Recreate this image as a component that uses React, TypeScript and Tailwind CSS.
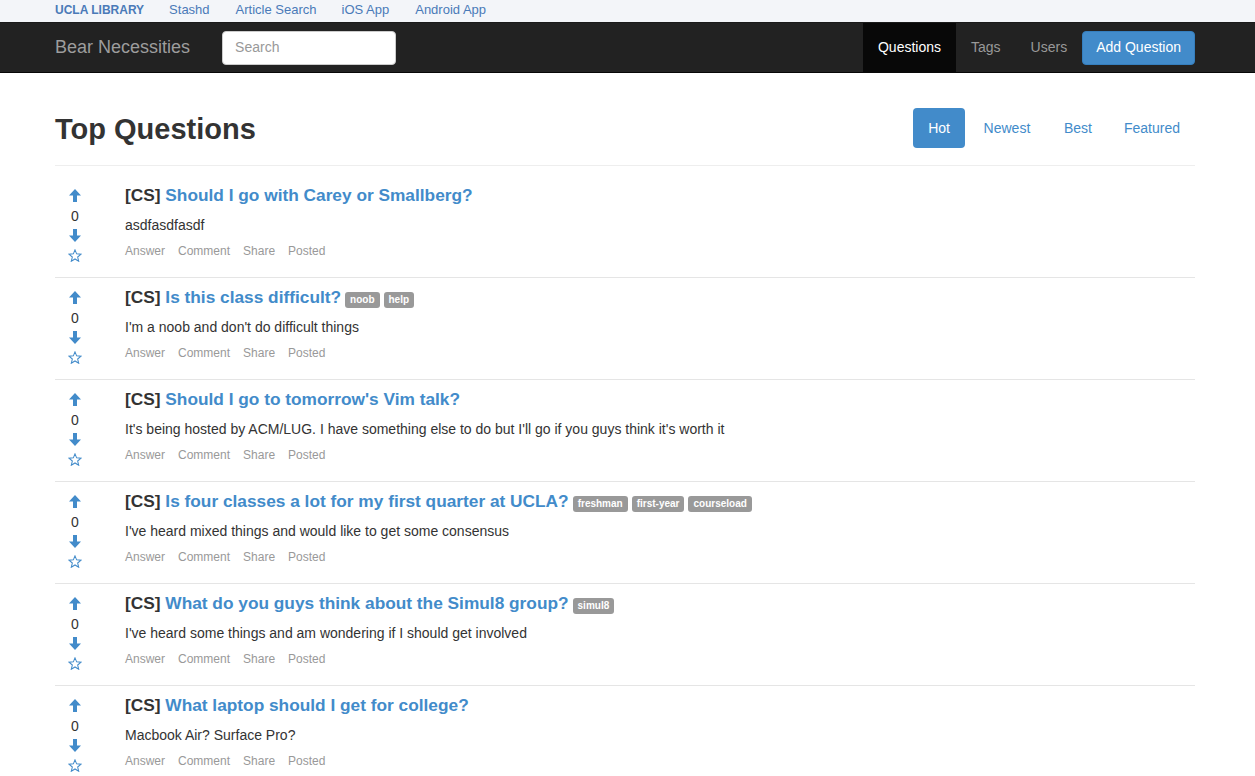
import React from "react";

const BLUE = "#428bca";

function ArrowUp() {
  return (
    <svg width="12" height="13" viewBox="0 0 12 13" className="block">
      <path d="M6 0 L12 6.5 L8 6.5 L8 13 L4 13 L4 6.5 L0 6.5 Z" fill={BLUE} />
    </svg>
  );
}
function ArrowDown() {
  return (
    <svg width="12" height="13" viewBox="0 0 12 13" className="block">
      <path d="M6 13 L12 6.5 L8 6.5 L8 0 L4 0 L4 6.5 L0 6.5 Z" fill={BLUE} />
    </svg>
  );
}
function Star() {
  return (
    <svg width="14" height="13" viewBox="0 0 24 23" className="block">
      <path
        d="M12 1.5 L14.9 8.6 L22.6 9.2 L16.7 14.2 L18.6 21.7 L12 17.6 L5.4 21.7 L7.3 14.2 L1.4 9.2 L9.1 8.6 Z"
        fill="none"
        stroke={BLUE}
        strokeWidth="1.8"
        strokeLinejoin="miter"
      />
    </svg>
  );
}

type Q = { title: string; body: string; tags: string[] };

const questions: Q[] = [
  { title: "Should I go with Carey or Smallberg?", body: "asdfasdfasdf", tags: [] },
  { title: "Is this class difficult?", body: "I'm a noob and don't do difficult things", tags: ["noob", "help"] },
  {
    title: "Should I go to tomorrow's Vim talk?",
    body: "It's being hosted by ACM/LUG. I have something else to do but I'll go if you guys think it's worth it",
    tags: [],
  },
  {
    title: "Is four classes a lot for my first quarter at UCLA?",
    body: "I've heard mixed things and would like to get some consensus",
    tags: ["freshman", "first-year", "courseload"],
  },
  {
    title: "What do you guys think about the Simul8 group?",
    body: "I've heard some things and am wondering if I should get involved",
    tags: ["simul8"],
  },
  { title: "What laptop should I get for college?", body: "Macbook Air? Surface Pro?", tags: [] },
];

function Row({ q, first }: { q: Q; first: boolean }) {
  return (
    <div
      className={`flex h-[102px] border-t ${first ? "border-transparent" : "border-[#e5e5e5]"}`}
    >
      <div className="w-[40px] flex flex-col items-center pt-[3px]">
        <div className="h-[13px] mt-[10px]"><ArrowUp /></div>
        <div className="text-[14px] leading-[14px] h-[14px] mt-[7px] text-[#333]">0</div>
        <div className="h-[13px] mt-[6px]"><ArrowDown /></div>
        <div className="h-[13px] mt-[7px]"><Star /></div>
      </div>
      <div className="ml-[30px] flex flex-col pt-[9px]">
        <div className="flex items-center h-[20px] leading-[20px]">
          <span className="text-[17.3px] font-bold text-[#333]">[CS]&nbsp;</span>
          <span className="text-[17.3px] font-bold text-[#428bca]">{q.title}</span>
          {q.tags.length > 0 && (
            <span className="flex gap-[4px] ml-[4px] mt-[5px]">
              {q.tags.map((t) => (
                <span
                  key={t}
                  className="bg-[#999] text-white text-[10px] font-bold rounded-[3px] px-[5px] h-[16px] leading-[16px]"
                >
                  {t}
                </span>
              ))}
            </span>
          )}
        </div>
        <div className="mt-[10px] h-[20px] leading-[20px] text-[14px] text-[#333]">{q.body}</div>
        <div className="mt-[8px] flex gap-[13px] text-[12px] leading-[16px] text-[#999]">
          <span>Answer</span>
          <span>Comment</span>
          <span>Share</span>
          <span>Posted</span>
        </div>
      </div>
    </div>
  );
}

export default function App() {
  return (
    <div
      className="w-[1255px] h-[776px] overflow-hidden bg-white"
      style={{ fontFamily: '"Liberation Sans", Arial, sans-serif' }}
    >
      {/* top bar */}
      <div className="h-[22px] bg-[#f3f5f9] flex items-center pl-[55px] gap-[25px] text-[13px] pb-[2px]">
        <span className="font-bold text-[12px] text-[#4a7ab8]">UCLA LIBRARY</span>
        <span className="text-[#4a7ab8]">Stashd</span>
        <span className="text-[#4a7ab8] ml-[1px]">Article Search</span>
        <span className="text-[#4a7ab8]">iOS App</span>
        <span className="text-[#4a7ab8] ml-[1px]">Android App</span>
      </div>
      {/* navbar */}
      <div className="h-[51px] bg-[#222] border-b border-[#080808] border-t border-t-[#1a1a1a]">
        <div className="w-[1140px] ml-[55px] h-full flex items-center">
          <span className="text-[18px] text-[#9d9d9d]">Bear Necessities</span>
          <div className="ml-[32px] w-[174px] h-[34px] bg-white rounded-[4px] border border-[#ccc] flex items-center px-[12px] text-[14px] text-[#999]">
            Search
          </div>
          <div className="ml-auto flex items-stretch h-full">
            <div className="bg-[#080808] text-white text-[14px] px-[15px] flex items-center">Questions</div>
            <div className="text-[#999] text-[14px] px-[15px] flex items-center">Tags</div>
            <div className="text-[#999] text-[14px] px-[15px] flex items-center">Users</div>
            <div className="flex items-center">
              <div className="h-[34px] px-[13px] bg-[#428bca] border border-[#357ebd] rounded-[4px] text-white text-[14px] flex items-center">
                Add Question
              </div>
            </div>
          </div>
        </div>
      </div>
      {/* content */}
      <div className="w-[1140px] ml-[55px]">
        <div className="flex items-center justify-between h-[93px] pt-[18px] border-b border-[#eee]">
          <h1 className="text-[29px] font-bold text-[#333] pt-[4px]">Top Questions</h1>
          <div className="flex gap-[2px] text-[14px]">
            <div className="bg-[#428bca] text-white rounded-[4px] px-[15px] h-[40px] flex items-center">Hot</div>
            <div className="text-[#428bca] px-[15px] h-[40px] flex items-center w-[80px] justify-center">Newest</div>
            <div className="text-[#428bca] px-[15px] h-[40px] flex items-center">Best</div>
            <div className="text-[#428bca] px-[15px] h-[40px] flex items-center">Featured</div>
          </div>
        </div>
        <div className="mt-[9px]">
          {questions.map((q, i) => (
            <Row key={i} q={q} first={i === 0} />
          ))}
        </div>
      </div>
    </div>
  );
}
